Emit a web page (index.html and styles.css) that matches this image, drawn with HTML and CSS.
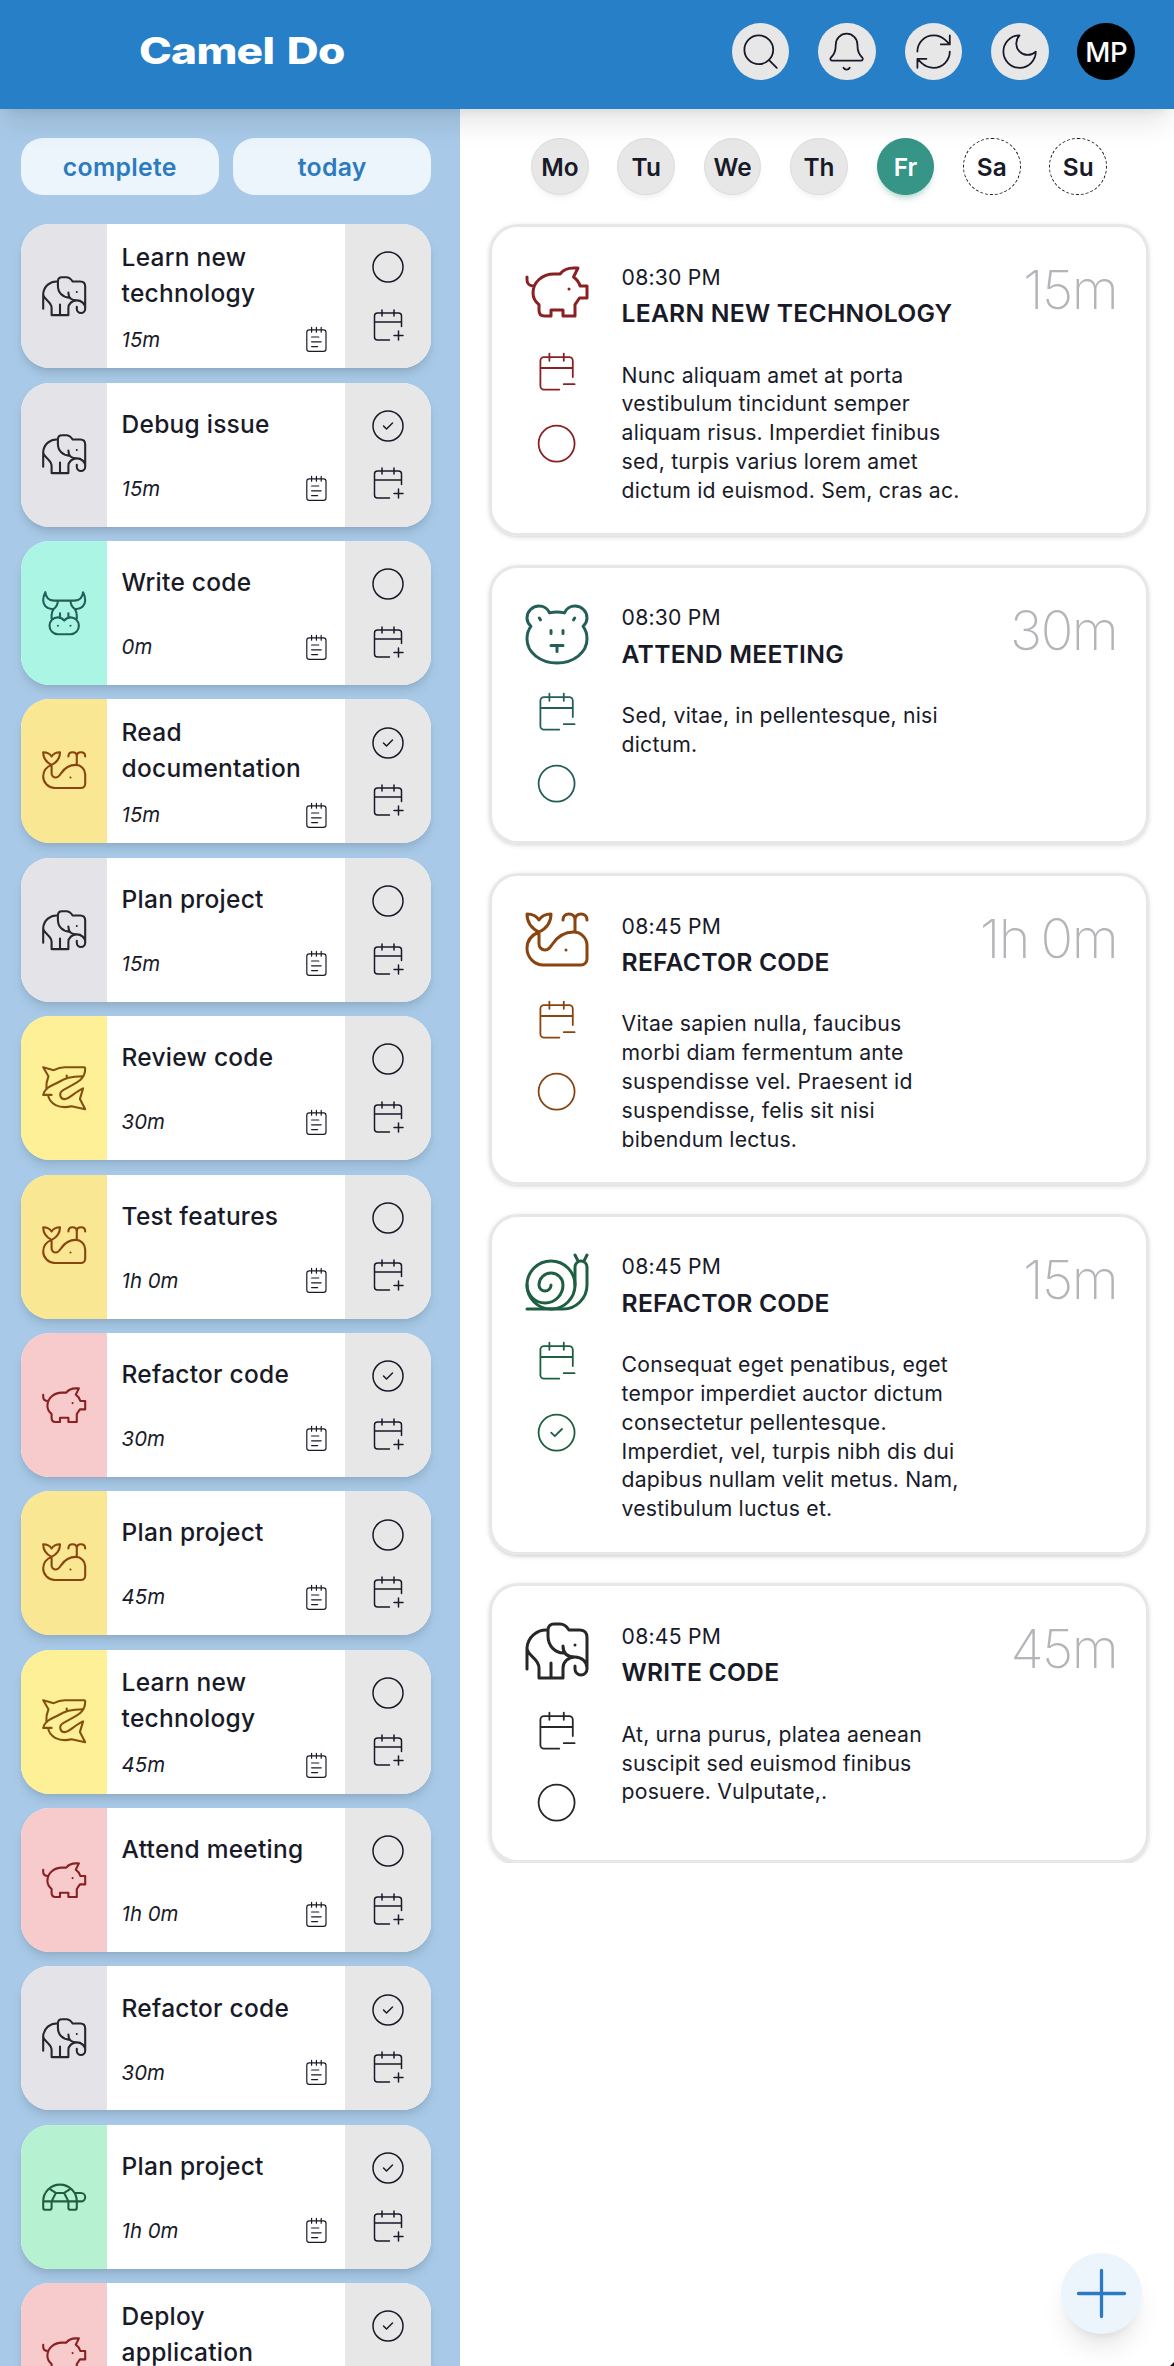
FILE: index.html
```html
<!DOCTYPE html>
<html lang="en">
<head>
<meta charset="utf-8">
<title>Camel Do</title>
<link rel="stylesheet" href="styles.css">
</head>
<body>
<svg class="sprite" aria-hidden="true">
  <symbol id="search" viewBox="0 0 24 24"><circle cx="11" cy="11" r="8"/><path d="m21 21-4.3-4.3"/></symbol>
  <symbol id="bell" viewBox="0 0 24 24"><path d="M10.268 21a2 2 0 0 0 3.464 0M3.262 15.326A1 1 0 0 0 4 17h16a1 1 0 0 0 .74-1.673C19.41 13.956 18 12.499 18 8A6 6 0 0 0 6 8c0 4.499-1.411 5.956-2.738 7.326"/></symbol>
  <symbol id="refresh" viewBox="0 0 24 24"><path d="M3 12a9 9 0 0 1 9-9 9.75 9.75 0 0 1 6.74 2.74L21 8M21 3v5h-5M21 12a9 9 0 0 1-9 9 9.75 9.75 0 0 1-6.74-2.74L3 16M8 16H3v5"/></symbol>
  <symbol id="moon" viewBox="0 0 24 24"><path d="M12 3a6 6 0 0 0 9 9 9 9 0 1 1-9-9Z"/></symbol>
  <symbol id="plus" viewBox="0 0 24 24"><path d="M5 12h14M12 5v14"/></symbol>
  <symbol id="open" viewBox="0 0 24 24"><circle cx="12" cy="12" r="10"/></symbol>
  <symbol id="done" viewBox="0 0 24 24"><circle cx="12" cy="12" r="10"/><path d="m9 12 2 2 4-4"/></symbol>
  <symbol id="cal-plus" viewBox="0 0 24 24"><path d="M8 2v4M16 2v4M21 13V6a2 2 0 0 0-2-2H5a2 2 0 0 0-2 2v14a2 2 0 0 0 2 2h8M3 10h18M16 19h6M19 16v6"/></symbol>
  <symbol id="cal-minus" viewBox="0 0 24 24"><path d="M16 19h6M16 2v4M21 15V6a2 2 0 0 0-2-2H5a2 2 0 0 0-2 2v14a2 2 0 0 0 2 2h8.5M3 10h18M8 2v4"/></symbol>
  <symbol id="notepad" viewBox="0 0 24 24"><path d="M8 2v4M12 2v4M16 2v4M8 10h6M8 14h8M8 18h5"/><rect width="16" height="18" x="4" y="4" rx="2"/></symbol>
  <symbol id="elephant" viewBox="0 0 24 24"><path d="M2 18v-7a6.4 6.4 0 0 1 7-6M2 11c0 2.6 4 3.4 4 6.6V21h8v-3.4c0-2 1.8-3.6 4-3.6s4 1.6 4 3.6M10 16v5M18 17v1a2 2 0 0 0 4 0V7.5C22 6 21.200 5 19.700 5H16c-.8-1.300-1.600-2-3-2h-2c-1.200 0-2 .8-2 2v2c0 3.500 2.500 5.600 5.200 5.700M14 10.300c0 2 1 3.700 4 3.700M18 10v.01"/></symbol>
  <symbol id="bull" viewBox="0 0 24 24"><path d="M3 2c.3 2.700 1.800 4 4 4h10c2.200 0 3.700-1.300 4-4 .8 1.500 1 2.500 1 4 0 2.200-1.800 4-4 4h-1c-1.200-.9-2-2-2-4M3 2C2.200 3.500 2 4.500 2 6c0 2.200 1.800 4 4 4h1c1.200-.9 2-2 2-4M7 10c-.7.8-1 1.800-1 3v1.500M17 10c.7.8 1 1.800 1 3v1.500M10 12v2M14 12v2M9 18v.01M15 18v.01M12 15.500c-.8-1-1.700-1.500-3-1.500a4 4 0 0 0 0 8h6a4 4 0 0 0 0-8c-1.300 0-2.200.5-3 1.500Z"/></symbol>
  <symbol id="whale" viewBox="0 0 24 24"><path d="M6 9c-2.500-1.200-4-3.200-4-6 1.800 0 3.200.7 4 2 .8-1.300 2.200-2 4-2 0 2.800-1.500 4.800-4 6ZM6 9c-2.500 1-4 3-4 5.500C2 17.500 4.500 20 7.500 20H20a2 2 0 0 0 2-2v-4.500C22 11 20 9 17.500 9c-3.500 0-5.500 1.800-7 4-.8 1.200-1.300 2-2.500 2s-2-1-2-2ZM18 9V5c0-1.200-.8-2-2-2s-2 .8-2 2M18 5c0-1.200.8-2 2-2s2 .8 2 2M15 15v.01"/></symbol>
  <symbol id="shark" viewBox="0 0 24 24"><path d="M3.500 12.500c-.2-2.300.2-4.300 1-6.200L2 2l5 1.400C8.700 2.500 10.300 2 12.300 2H21.500c.3 0 .5.2.5.5 0 4.500-2.500 6-6 7.900l-4.300 2.400c-2.700 1.500-1.600 4.500.6 4.400 2.200-.1 4.700-3.300 8.700-5.100l-1.500 5L22 22l-6.500-1.400C9.500 22 5 19.500 4.300 15.200M6 15.200H2c1-3.900 4.500-4.500 7-5.900 3.500-2 6-3 11.700-3M13.200 6v.8"/></symbol>
  <symbol id="pig" viewBox="0 0 24 24"><path d="M2 7v1c0 1.200.9 2 2.300 2M13 6h-2c-4 0-7 2.800-7 6.300 0 1.600.8 2.900 2 3.900V18c0 1.200.6 2 1.800 2H10v-2h4v2h4v-3.800l1.500-2.200H22v-4h-2.300c-.4-1.400-1.200-2.300-2.200-3L19 4h-1.500c-2 0-3.500.7-4.500 2M16 11v.01"/></symbol>
  <symbol id="bear" viewBox="0 0 24 24"><path d="M9.500 5.300C9 4 7.600 3 6 3 3.800 3 2 4.800 2 7c0 1 .5 2 1.300 2.800C2.400 11 2 12.400 2 14c0 4.500 4.500 8 10 8s10-3.500 10-8c0-1.600-.4-3-1.300-4.200C21.500 9 22 8 22 7c0-2.200-1.800-4-4-4-1.600 0-3 1-3.500 2.300a12 12 0 0 0-5 0ZM6.100 7l.4.600M17.900 7l-.4.600M10 11.200v1M14 11.200v1M10 16.200h4M12 16.200v2"/></symbol>
  <symbol id="snail" viewBox="0 0 24 24"><path d="M2 13a6 6 0 1 0 12 0 4 4 0 1 0-8 0 2 2 0 0 0 4 0"/><circle cx="10" cy="13" r="8"/><path d="M2 21h12c4.400 0 8-3.600 8-8V7a2 2 0 1 0-4 0v6M18 3l1.100 2.200M22 3l-1.100 2.200"/></symbol>
  <symbol id="turtle" viewBox="0 0 24 24"><path d="m12 10 2 4v3a1 1 0 0 0 1 1h2a1 1 0 0 0 1-1v-3a8 8 0 1 0-16 0v3a1 1 0 0 0 1 1h2a1 1 0 0 0 1-1v-3l2-4h4ZM4.820 7.900 8 10M15.180 7.900 12 10M16.930 10H20a2 2 0 0 1 0 4H2"/></symbol>
</svg>

<div class="app">
  <header class="topbar">
    <h1 class="brand">Camel Do</h1>
    <nav class="tools">
      <button class="round"><svg class="ic"><use href="#search"/></svg></button>
      <button class="round"><svg class="ic"><use href="#bell"/></svg></button>
      <button class="round"><svg class="ic"><use href="#refresh"/></svg></button>
      <button class="round"><svg class="ic"><use href="#moon"/></svg></button>
      <div class="round avatar">MP</div>
    </nav>
  </header>

  <div class="columns">
    <aside class="backlog">
      <div class="filters"><button class="filter">complete</button><button class="filter">today</button></div>
      <article class="task"><div class="tag zinc"><svg class="ic"><use href="#elephant"/></svg></div><div class="info"><h2>Learn new technology</h2><div class="meta"><em>15m</em><svg class="ic"><use href="#notepad"/></svg></div></div><div class="acts"><svg class="ic"><use href="#open"/></svg><svg class="ic"><use href="#cal-plus"/></svg></div></article>
      <article class="task"><div class="tag zinc"><svg class="ic"><use href="#elephant"/></svg></div><div class="info"><h2>Debug issue</h2><div class="meta"><em>15m</em><svg class="ic"><use href="#notepad"/></svg></div></div><div class="acts"><svg class="ic"><use href="#done"/></svg><svg class="ic"><use href="#cal-plus"/></svg></div></article>
      <article class="task"><div class="tag teal"><svg class="ic"><use href="#bull"/></svg></div><div class="info"><h2>Write code</h2><div class="meta"><em>0m</em><svg class="ic"><use href="#notepad"/></svg></div></div><div class="acts"><svg class="ic"><use href="#open"/></svg><svg class="ic"><use href="#cal-plus"/></svg></div></article>
      <article class="task"><div class="tag amber"><svg class="ic"><use href="#whale"/></svg></div><div class="info"><h2>Read documentation</h2><div class="meta"><em>15m</em><svg class="ic"><use href="#notepad"/></svg></div></div><div class="acts"><svg class="ic"><use href="#done"/></svg><svg class="ic"><use href="#cal-plus"/></svg></div></article>
      <article class="task"><div class="tag zinc"><svg class="ic"><use href="#elephant"/></svg></div><div class="info"><h2>Plan project</h2><div class="meta"><em>15m</em><svg class="ic"><use href="#notepad"/></svg></div></div><div class="acts"><svg class="ic"><use href="#open"/></svg><svg class="ic"><use href="#cal-plus"/></svg></div></article>
      <article class="task"><div class="tag yellow"><svg class="ic"><use href="#shark"/></svg></div><div class="info"><h2>Review code</h2><div class="meta"><em>30m</em><svg class="ic"><use href="#notepad"/></svg></div></div><div class="acts"><svg class="ic"><use href="#open"/></svg><svg class="ic"><use href="#cal-plus"/></svg></div></article>
      <article class="task"><div class="tag amber"><svg class="ic"><use href="#whale"/></svg></div><div class="info"><h2>Test features</h2><div class="meta"><em>1h 0m</em><svg class="ic"><use href="#notepad"/></svg></div></div><div class="acts"><svg class="ic"><use href="#open"/></svg><svg class="ic"><use href="#cal-plus"/></svg></div></article>
      <article class="task"><div class="tag red"><svg class="ic"><use href="#pig"/></svg></div><div class="info"><h2>Refactor code</h2><div class="meta"><em>30m</em><svg class="ic"><use href="#notepad"/></svg></div></div><div class="acts"><svg class="ic"><use href="#done"/></svg><svg class="ic"><use href="#cal-plus"/></svg></div></article>
      <article class="task"><div class="tag amber"><svg class="ic"><use href="#whale"/></svg></div><div class="info"><h2>Plan project</h2><div class="meta"><em>45m</em><svg class="ic"><use href="#notepad"/></svg></div></div><div class="acts"><svg class="ic"><use href="#open"/></svg><svg class="ic"><use href="#cal-plus"/></svg></div></article>
      <article class="task"><div class="tag yellow"><svg class="ic"><use href="#shark"/></svg></div><div class="info"><h2>Learn new technology</h2><div class="meta"><em>45m</em><svg class="ic"><use href="#notepad"/></svg></div></div><div class="acts"><svg class="ic"><use href="#open"/></svg><svg class="ic"><use href="#cal-plus"/></svg></div></article>
      <article class="task"><div class="tag red"><svg class="ic"><use href="#pig"/></svg></div><div class="info"><h2>Attend meeting</h2><div class="meta"><em>1h 0m</em><svg class="ic"><use href="#notepad"/></svg></div></div><div class="acts"><svg class="ic"><use href="#open"/></svg><svg class="ic"><use href="#cal-plus"/></svg></div></article>
      <article class="task"><div class="tag zinc"><svg class="ic"><use href="#elephant"/></svg></div><div class="info"><h2>Refactor code</h2><div class="meta"><em>30m</em><svg class="ic"><use href="#notepad"/></svg></div></div><div class="acts"><svg class="ic"><use href="#done"/></svg><svg class="ic"><use href="#cal-plus"/></svg></div></article>
      <article class="task"><div class="tag green"><svg class="ic"><use href="#turtle"/></svg></div><div class="info"><h2>Plan project</h2><div class="meta"><em>1h 0m</em><svg class="ic"><use href="#notepad"/></svg></div></div><div class="acts"><svg class="ic"><use href="#done"/></svg><svg class="ic"><use href="#cal-plus"/></svg></div></article>
      <article class="task"><div class="tag red"><svg class="ic"><use href="#pig"/></svg></div><div class="info"><h2>Deploy application</h2><div class="meta"><em>15m</em><svg class="ic"><use href="#notepad"/></svg></div></div><div class="acts"><svg class="ic"><use href="#done"/></svg><svg class="ic"><use href="#cal-plus"/></svg></div></article>
    </aside>

    <main class="schedule">
      <div class="days">
        <button class="day">Mo</button><button class="day">Tu</button><button class="day">We</button><button class="day">Th</button><button class="day current">Fr</button><button class="day off">Sa</button><button class="day off">Su</button>
      </div>
      <div class="events">
        <article class="event">
          <div class="side ink-red"><svg class="ic"><use href="#pig"/></svg><svg class="ic small"><use href="#cal-minus"/></svg><svg class="ic small"><use href="#open"/></svg></div>
          <div class="body"><time>08:30 PM</time><h3>Learn new technology</h3><p>Nunc aliquam amet at porta<br>vestibulum tincidunt semper<br>aliquam risus. Imperdiet finibus<br>sed, turpis varius lorem amet<br>dictum id euismod. Sem, cras ac.</p></div>
          <div class="length">15m</div>
        </article>
        <article class="event">
          <div class="side ink-teal"><svg class="ic"><use href="#bear"/></svg><svg class="ic small"><use href="#cal-minus"/></svg><svg class="ic small"><use href="#open"/></svg></div>
          <div class="body"><time>08:30 PM</time><h3>Attend meeting</h3><p>Sed, vitae, in pellentesque, nisi<br>dictum.</p></div>
          <div class="length">30m</div>
        </article>
        <article class="event">
          <div class="side ink-amber"><svg class="ic"><use href="#whale"/></svg><svg class="ic small"><use href="#cal-minus"/></svg><svg class="ic small"><use href="#open"/></svg></div>
          <div class="body"><time>08:45 PM</time><h3>Refactor code</h3><p>Vitae sapien nulla, faucibus<br>morbi diam fermentum ante<br>suspendisse vel. Praesent id<br>suspendisse, felis sit nisi<br>bibendum lectus.</p></div>
          <div class="length">1h 0m</div>
        </article>
        <article class="event">
          <div class="side ink-green"><svg class="ic"><use href="#snail"/></svg><svg class="ic small"><use href="#cal-minus"/></svg><svg class="ic small"><use href="#done"/></svg></div>
          <div class="body"><time>08:45 PM</time><h3>Refactor code</h3><p>Consequat eget penatibus, eget<br>tempor imperdiet auctor dictum<br>consectetur pellentesque.<br>Imperdiet, vel, turpis nibh dis dui<br>dapibus nullam velit metus. Nam,<br>vestibulum luctus et.</p></div>
          <div class="length">15m</div>
        </article>
        <article class="event">
          <div class="side ink-zinc"><svg class="ic"><use href="#elephant"/></svg><svg class="ic small"><use href="#cal-minus"/></svg><svg class="ic small"><use href="#open"/></svg></div>
          <div class="body"><time>08:45 PM</time><h3>Write code</h3><p>At, urna purus, platea aenean<br>suscipit sed euismod finibus<br>posuere. Vulputate,.</p></div>
          <div class="length">45m</div>
        </article>
      </div>
    </main>
  </div>
  <button class="fab"><svg class="ic"><use href="#plus"/></svg></button>
</div>
</body>
</html>
```
FILE: styles.css
```css
* { box-sizing: border-box; margin: 0; padding: 0; }

body {
  font-family: Inter, "Liberation Sans", sans-serif;
  color: #191a28;
  background: #fff;
}

button { border: 0; font: inherit; color: inherit; }

.sprite { display: none; }

.ic {
  width: 43.2px;
  height: 43.2px;
  flex: none;
  fill: none;
  stroke: currentColor;
  stroke-width: 1;
  stroke-linecap: round;
  stroke-linejoin: round;
}

.app {
  position: relative;
  display: flex;
  flex-direction: column;
  width: 1174px;
  height: 2366px;
  overflow: hidden;
}

/* dark notch of the rounded window corner */
.app::after {
  content: "";
  position: absolute;
  right: 0;
  bottom: 0;
  width: 4px;
  height: 4px;
  background: #111;
  clip-path: polygon(100% 0, 100% 100%, 0 100%);
}

.topbar {
  position: relative;
  z-index: 1;
  display: flex;
  justify-content: space-between;
  flex: none;
  height: 109px;
  padding: 22.8px 39px 0 139px;
  background: #277fc7;
  box-shadow: 0 18px 27px -5.4px rgba(0, 0, 0, .1), 0 7.2px 10.8px -7.2px rgba(0, 0, 0, .1);
}

.brand {
  color: #fff;
  font-size: 36.5px;
  font-weight: 800;
  line-height: 57px;
  letter-spacing: -.6px;
  word-spacing: 3px;
  transform: scaleX(1.21);
  transform-origin: left center;
}

.tools { display: flex; gap: 28.8px; }

.round {
  display: flex;
  align-items: center;
  justify-content: center;
  width: 57.6px;
  height: 57.6px;
  border-radius: 50%;
  background: #e7e7e8;
}

.avatar { background: #000; color: #fff; font-size: 27.5px; font-weight: 500; letter-spacing: -.3px; }

.columns { display: flex; flex: 1; min-height: 0; }

.backlog {
  display: flex;
  flex-direction: column;
  gap: 14.4px;
  flex: none;
  width: 460px;
  padding: 28.8px 28.8px 0 20.8px;
  background: #a8cae8;
}

.filters { display: flex; gap: 14.4px; margin-bottom: 14.4px; }

.filter {
  flex: 1;
  height: 57.6px;
  border-radius: 21.6px;
  background: #edf5fc;
  color: #2c7bbf;
  font-size: 24.8px;
  font-weight: 600;
  letter-spacing: .3px;
}

.task {
  display: flex;
  flex: none;
  height: 144px;
  border-radius: 28.8px;
  background: #fff;
  overflow: hidden;
  box-shadow: 0 7.2px 10.8px -1.8px rgba(0, 0, 0, .1), 0 3.6px 7.2px -3.6px rgba(0, 0, 0, .1);
}

.tag {
  display: flex;
  align-items: center;
  justify-content: center;
  width: 86.4px;
}
.tag .ic { width: 50.4px; height: 50.4px; }

.zinc { background: #e4e3e8; color: #27272a; }
.teal { background: #abf5e4; color: #245e59; }
.amber { background: #fae793; color: #8a440f; }
.yellow { background: #fdf097; color: #845010; }
.red { background: #f7cacb; color: #8a2022; }
.green { background: #b6f2d1; color: #1f5f41; }

.info {
  display: grid;
  align-items: center;
  gap: 14.4px;
  flex: 1;
  padding: 14.4px;
}

.info h2 { font-size: 24.5px; font-weight: 500; line-height: 36px; letter-spacing: .25px; }

.meta {
  display: flex;
  align-items: center;
  justify-content: space-between;
  font-size: 20.4px;
  line-height: 28.8px;
}
.meta em { padding-top: 1px; }
.meta .ic { width: 28.8px; height: 28.8px; }

.acts {
  display: flex;
  flex-direction: column;
  align-items: center;
  justify-content: center;
  gap: 21.6px;
  width: 86.4px;
  background: #e7e7e8;
}
.acts .ic { width: 36px; height: 36px; }

.schedule { flex: 1; padding: 28.8px 25px 0 29px; }

.days { display: flex; justify-content: center; gap: 28.8px; }

.day {
  width: 57.6px;
  height: 57.6px;
  border-radius: 50%;
  border: 1px solid #dcdcdd;
  background: #e7e7e8;
  font-size: 24.4px;
  font-weight: 600;
  box-shadow: 0 5px 6px -3px rgba(0, 0, 0, .08);
}

.day.current {
  border-color: #319083;
  background: #369587;
  color: #fff;
  box-shadow: 0 5px 7px -3px rgba(54, 149, 135, .5);
}

.day.off { border: 1px dashed #191a28; background: none; box-shadow: none; }

.events {
  display: flex;
  flex-direction: column;
  gap: 28.6px;
  margin-top: 28.8px;
  clip-path: inset(-10px -10px 0);
}

.event {
  display: flex;
  gap: 28.8px;
  padding: 28.8px;
  border: 3px solid #e7e7e8;
  border-radius: 28.8px;
  box-shadow: 0 1.8px 5.4px rgba(0, 0, 0, .1), 0 1.8px 3.6px -1.8px rgba(0, 0, 0, .1);
}

.side { display: flex; flex-direction: column; align-items: center; width: 72px; }
.side .ic { width: 72px; height: 72px; }
.side .small { width: 43.2px; height: 43.2px; margin: 21.6px 0 7.2px; }

.ink-red { color: #8a2022; }
.ink-teal { color: #245e59; }
.ink-amber { color: #8a440f; }
.ink-green { color: #1f5f41; }
.ink-zinc { color: #27272a; }

.body {
  flex: 1;
  padding-top: 6.7px;
  font-size: 21.2px;
  line-height: 28.8px;
  letter-spacing: .2px;
}
.body time { display: block; }
.body h3 {
  margin: 3.8px 0 29.3px;
  font-size: 24.7px;
  font-weight: 600;
  line-height: 36px;
  letter-spacing: .22px;
  text-transform: uppercase;
  white-space: nowrap;
}

.length {
  padding-top: 2px;
  color: #b4b4b9;
  font-size: 54px;
  font-weight: 150;
  line-height: 64.8px;
  letter-spacing: -1.5px;
  word-spacing: -2px;
  white-space: nowrap;
}

.fab {
  position: absolute;
  right: 32px;
  bottom: 32px;
  display: flex;
  align-items: center;
  justify-content: center;
  width: 81px;
  height: 81px;
  border-radius: 50%;
  background: #edf5fc;
  color: #2c7bc2;
  box-shadow: 0 18px 27px -5.4px rgba(0, 0, 0, .1), 0 7.2px 10.8px -7.2px rgba(0, 0, 0, .1);
}
.fab .ic { width: 79px; height: 79px; }
```
